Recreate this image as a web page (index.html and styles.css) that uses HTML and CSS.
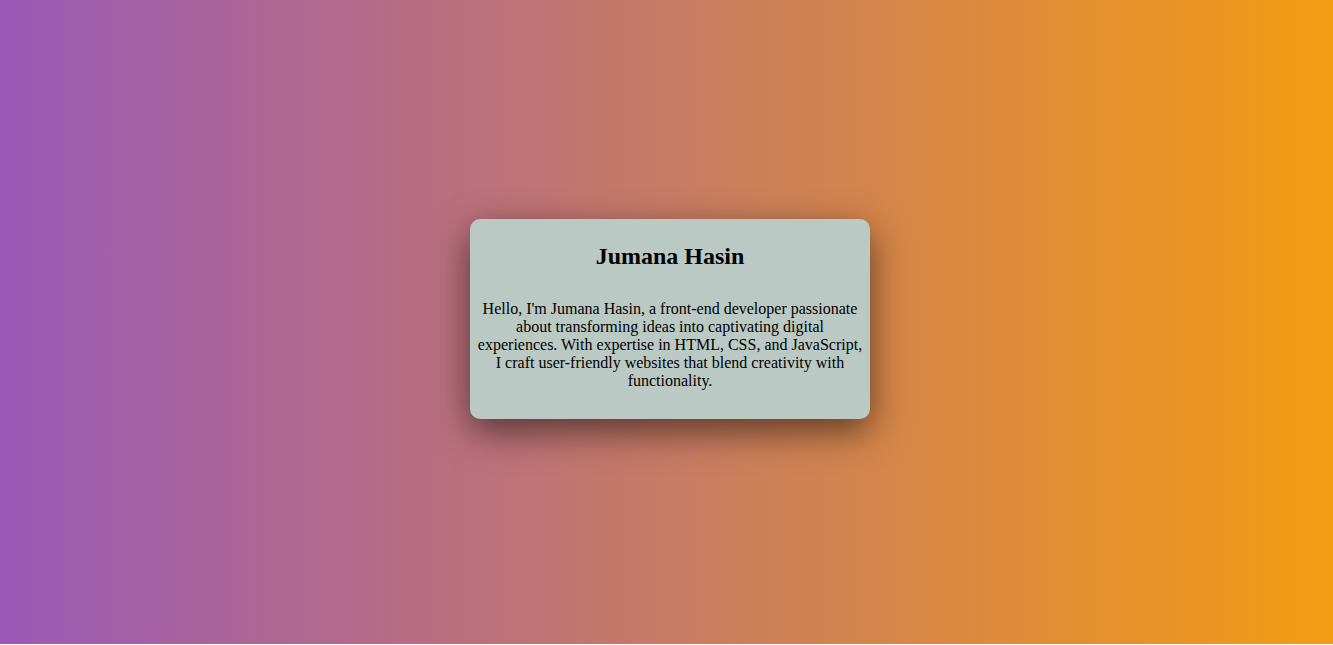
FILE: index.html
```html
<!DOCTYPE html>
<html lang="en">
<head>
  <meta charset="UTF-8">
  <meta name="viewport" content="width=device-width, initial-scale=1.0">
  <title>Jumana Hasin</title>
  <link rel="stylesheet" href="styles.css">
</head>
<body>
  <div class="page">
    <div class="card">
      <h2>Jumana Hasin</h2>
      <p>Hello, I'm Jumana Hasin, a front-end developer passionate about transforming ideas into captivating digital experiences. With expertise in HTML, CSS, and JavaScript, I craft user-friendly websites that blend creativity with functionality.</p>
    </div>
  </div>
</body>
</html>
```

FILE: styles.css
```css
html {
  background-color: #fff;
}
body {
  margin: 0;
  padding: 0;
  font-family: "Liberation Serif", "Times New Roman", serif;
  color: #000;
}
.page {
  height: 644px;
  display: flex;
  align-items: center;
  justify-content: center;
  padding: 0 0 6px 7px;
  box-sizing: border-box;
  background: linear-gradient(to right, #9b59b6, #f39c12);
}
.card {
  width: 400px;
  height: 200px;
  box-sizing: border-box;
  padding: 24px 6px 0;
  background-color: #bac9c3;
  border-radius: 10px;
  box-shadow: 0 12px 36px rgba(0, 0, 0, 0.55);
  text-align: center;
}
h2 {
  font-size: 24px;
  margin: 0 0 30px;
}
p {
  font-size: 16px;
  margin: 0;
}
```
